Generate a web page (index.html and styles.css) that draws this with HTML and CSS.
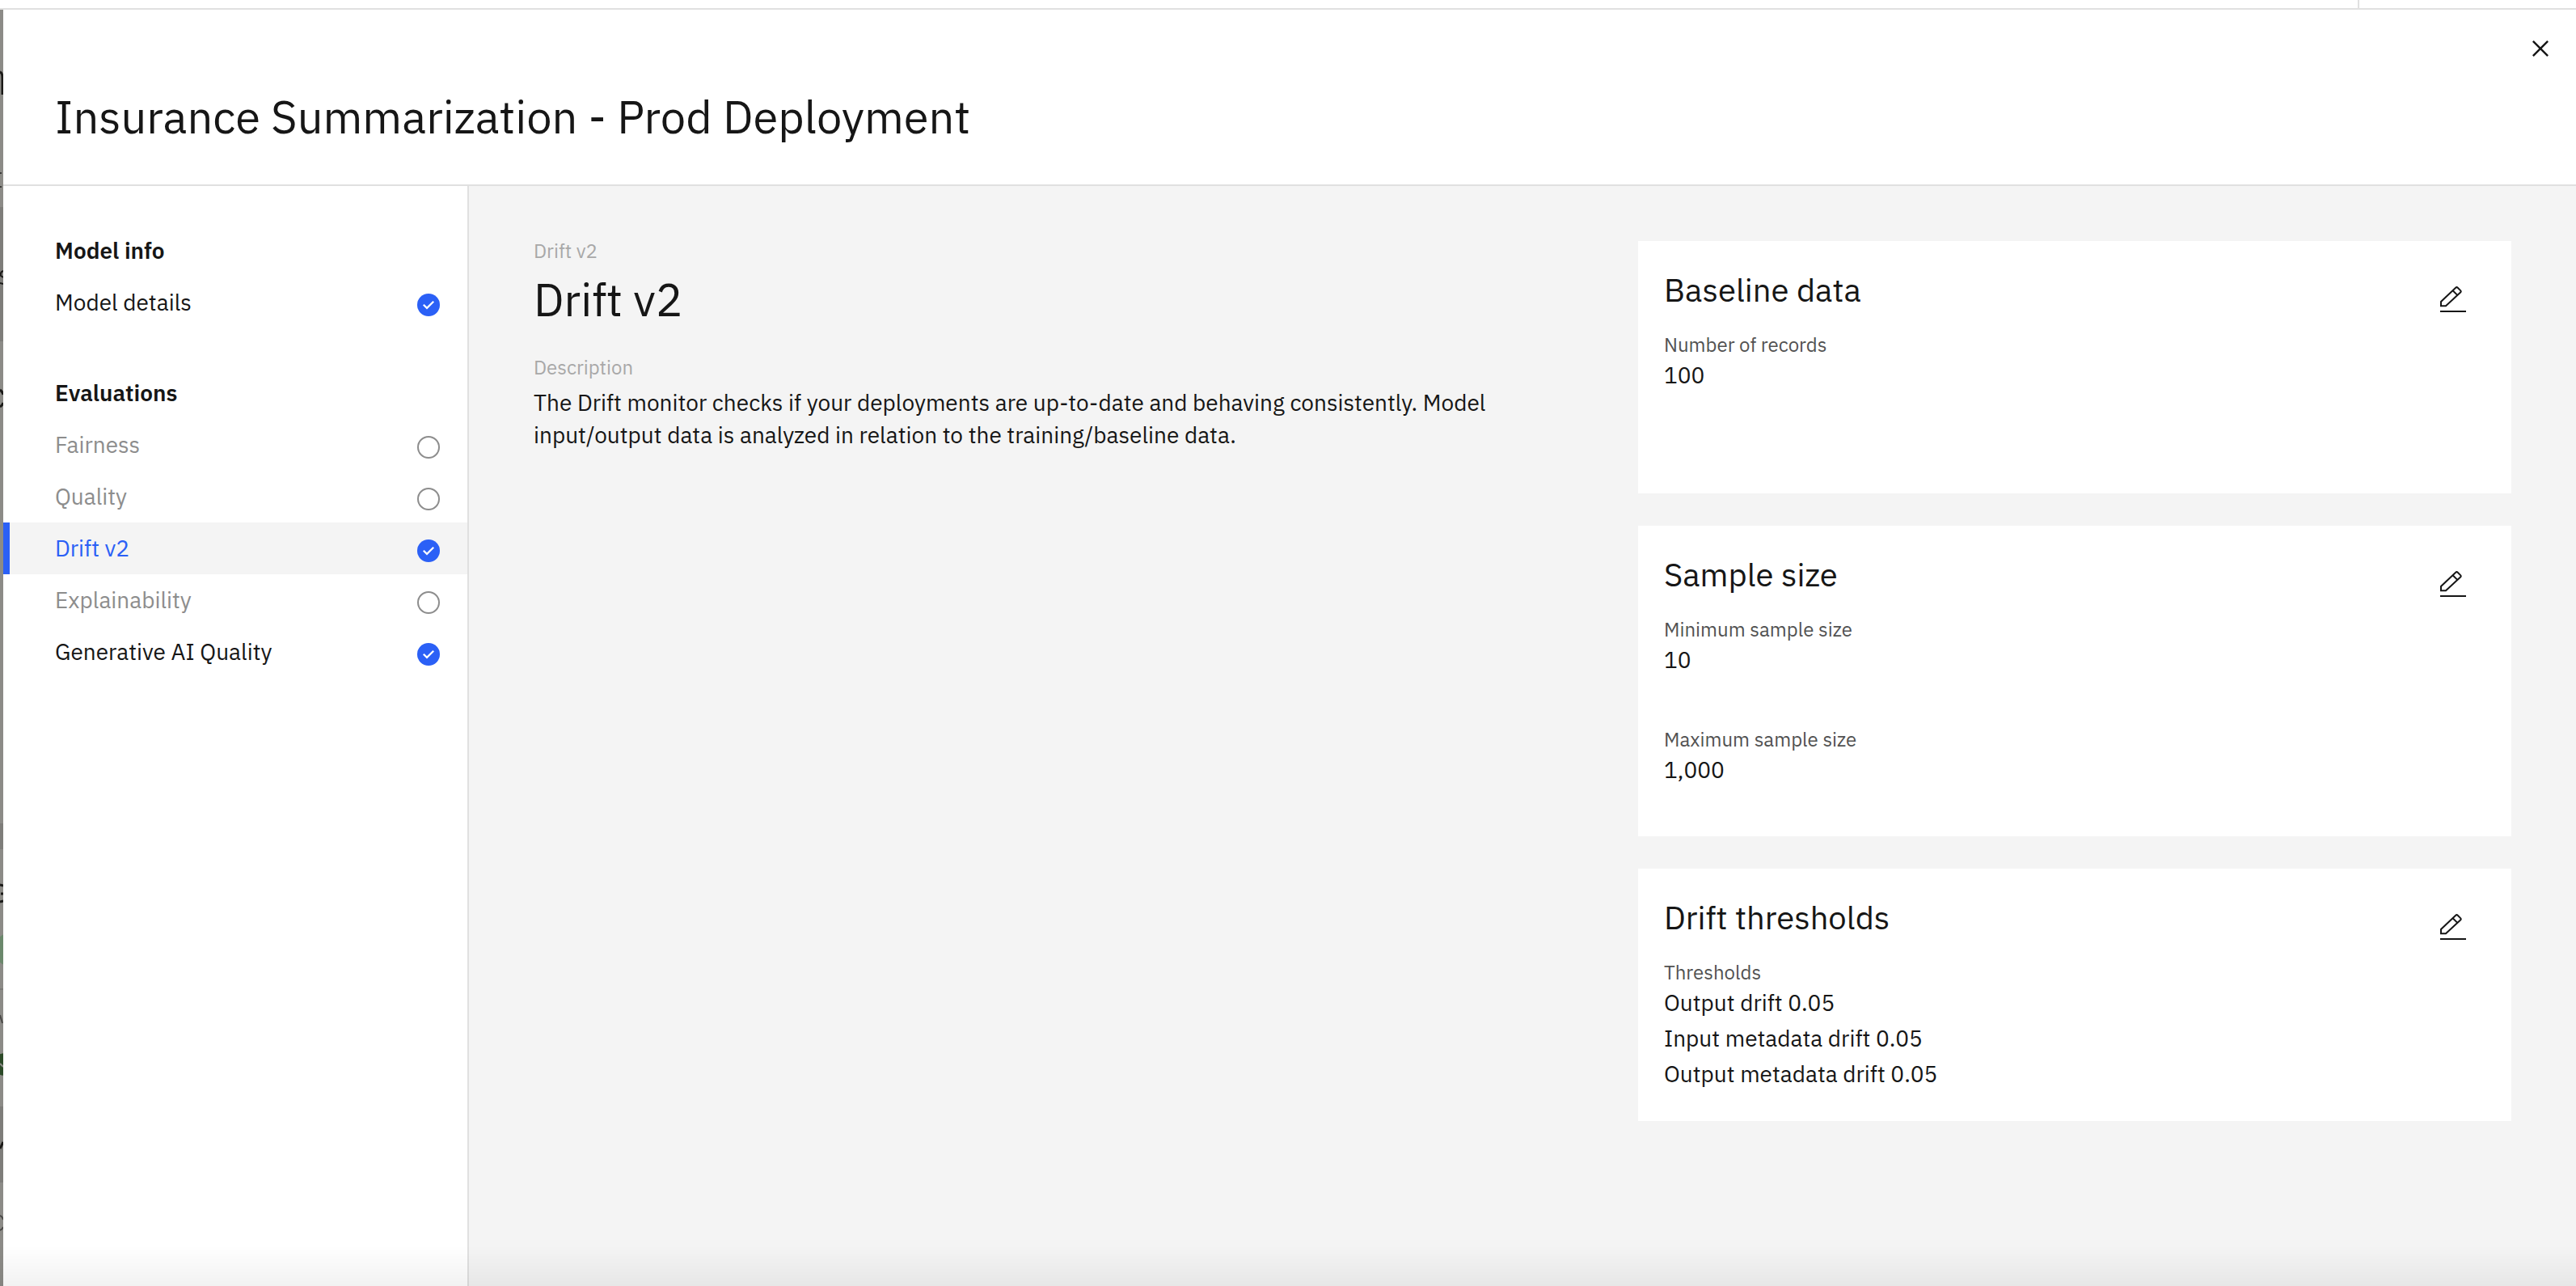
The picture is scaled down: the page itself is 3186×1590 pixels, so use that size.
FILE: index.html
```html
<!DOCTYPE html>
<html lang="en">
<head>
<meta charset="utf-8">
<title>Insurance Summarization - Prod Deployment</title>
<link rel="stylesheet" href="styles.css">
</head>
<body>
<svg class="sprite" aria-hidden="true">
  <symbol id="done" viewBox="0 0 32 32"><circle cx="16" cy="16" r="14" fill="#2b60f6"/><path d="M14 21.5L9 16.54 10.59 15 14 18.35 21.41 11 23 12.58z" fill="#fff"/></symbol>
  <symbol id="todo" viewBox="0 0 32 32"><circle cx="16" cy="16" r="13" fill="none" stroke="#8d8d8d" stroke-width="2"/></symbol>
  <symbol id="edit" viewBox="0 0 32 32"><path d="M1 24.3V18.9L19.2 1.7a1.8 1.8 0 0 1 2.5 0l3.4 3.4a1.8 1.8 0 0 1 0 2.5L7 24.3zM15.6 5.2l5.7 5.7" fill="none" stroke="#161616" stroke-width="2"/><path d="M0 30h32v2H0z" fill="#161616"/></symbol>
</svg>

<div class="topbar"><div class="topbar-actions"></div></div>

<div class="shell">
  <div class="backdrop" aria-hidden="true">
    <svg class="backdrop-art" width="4" height="1578">
      <path d="M0 244h4v166H0zM0 1006h4v32H0zM0 1356h4v94H0z" fill="#7e7d7a"/>
      <path d="M0 201h2v2H0zM0 218h2v2H0z" fill="#3c3b39"/>
      <path d="M0 1210h4v2H0z" fill="#7b7a77"/>
      <circle cx="14" cy="1162" r="21" fill="#6b886c"/>
      <circle cx="6" cy="1304" r="14" fill="#2c4a28"/>
      <path d="M0 1303l4 4" stroke="#8c8b87" stroke-width="2"/>
      <path d="M3 105V84q0-6-3-7" stroke="#1b1a18" stroke-width="3" fill="none"/>
      <path d="M4 323q-4 1-3 6l3 2M0 338l4 1" stroke="#1b1a18" stroke-width="2" fill="none"/>
      <path d="M0 470q3 2 4 6M0 491q3-2 4-5" stroke="#1b1a18" stroke-width="3" fill="none"/>
      <path d="M0 1082l4 1M0 1103l4-1M1 1093h3" stroke="#1b1a18" stroke-width="3" fill="none"/>
      <path d="M0 1243l3 10" stroke="#4a4947" stroke-width="2" fill="none"/>
      <path d="M0 1408l4-8" stroke="#1b1a18" stroke-width="3" fill="none"/>
      <path d="M0 1491q3 1 4 5M0 1509q3-1 4-4" stroke="#4a4947" stroke-width="2" fill="none"/>
    </svg>
  </div>

  <div class="panel">
    <header class="header">
      <h1 class="title">Insurance Summarization - Prod Deployment</h1>
      <button class="icon-button close" type="button" aria-label="Close">
        <svg width="40" height="40" viewBox="0 0 32 32"><path d="M24 9.4L22.6 8 16 14.6 9.4 8 8 9.4l6.6 6.6L8 22.6 9.4 24l6.6-6.6 6.6 6.6 1.4-1.4-6.6-6.6L24 9.4z" fill="#161616"/></svg>
      </button>
    </header>

    <div class="body">
      <nav class="sidebar" aria-label="Configuration">
        <section class="nav-group">
          <h2 class="nav-heading">Model info</h2>
          <a class="nav-item" href="#details">Model details<svg class="status"><use href="#done"/></svg></a>
        </section>
        <section class="nav-group">
          <h2 class="nav-heading">Evaluations</h2>
          <a class="nav-item muted" href="#fairness">Fairness<svg class="status"><use href="#todo"/></svg></a>
          <a class="nav-item muted" href="#quality">Quality<svg class="status"><use href="#todo"/></svg></a>
          <a class="nav-item active" href="#drift" aria-current="page">Drift v2<svg class="status"><use href="#done"/></svg></a>
          <a class="nav-item muted" href="#explainability">Explainability<svg class="status"><use href="#todo"/></svg></a>
          <a class="nav-item" href="#genai">Generative AI Quality<svg class="status"><use href="#done"/></svg></a>
        </section>
      </nav>

      <main class="main" id="drift">
        <section class="intro">
          <p class="hint">Drift v2</p>
          <h2 class="title intro-title">Drift v2</h2>
          <p class="hint">Description</p>
          <p class="description">The Drift monitor checks if your deployments are up-to-date and behaving consistently. Model input/output data is analyzed in relation to the training/baseline data.</p>
        </section>

        <div class="cards">
          <section class="card">
            <div class="card-header">
              <h3 class="card-title">Baseline data</h3>
              <button class="icon-button edit" type="button" aria-label="Edit baseline data"><svg width="32" height="32"><use href="#edit"/></svg></button>
            </div>
            <dl class="fields">
              <div><dt>Number of records</dt><dd>100</dd></div>
            </dl>
          </section>
          <section class="card">
            <div class="card-header">
              <h3 class="card-title">Sample size</h3>
              <button class="icon-button edit" type="button" aria-label="Edit sample size"><svg width="32" height="32"><use href="#edit"/></svg></button>
            </div>
            <dl class="fields">
              <div><dt>Minimum sample size</dt><dd>10</dd></div>
              <div><dt>Maximum sample size</dt><dd>1,000</dd></div>
            </dl>
          </section>
          <section class="card">
            <div class="card-header">
              <h3 class="card-title">Drift thresholds</h3>
              <button class="icon-button edit" type="button" aria-label="Edit drift thresholds"><svg width="32" height="32"><use href="#edit"/></svg></button>
            </div>
            <dl class="fields compact">
              <div><dt>Thresholds</dt><dd>Output drift 0.05</dd><dd>Input metadata drift 0.05</dd><dd>Output metadata drift 0.05</dd></div>
            </dl>
          </section>
        </div>
      </main>
    </div>
  </div>
</div>
<div class="fade"></div>
</body>
</html>
```
FILE: styles.css
```css
* { box-sizing: border-box; margin: 0; padding: 0; }

body {
  display: flex;
  flex-direction: column;
  min-height: 100vh;
  background: #fff;
  color: #161616;
  font-family: "IBM Plex Sans", "Liberation Sans", sans-serif;
  font-size: 28px;
  line-height: 40px;
}

h1, h2, h3 { font-weight: 400; }
a { color: inherit; text-decoration: none; }
svg { display: block; }
.sprite { position: absolute; width: 0; height: 0; }

.topbar {
  display: flex;
  justify-content: flex-end;
  height: 12px;
  border-bottom: 2px solid #e0e0e0;
}
.topbar-actions { width: 270px; border-left: 2px solid #e0e0e0; }

.shell { display: flex; flex: 1; }
.backdrop { position: relative; width: 4px; background: #8c8b87; overflow: hidden; }
.backdrop-art { position: absolute; top: 0; left: 0; }

.panel { display: flex; flex: 1; flex-direction: column; min-width: 0; }
.header {
  display: flex;
  align-items: flex-start;
  justify-content: space-between;
  padding: 28px 24px 48px 64px;
  border-bottom: 2px solid #e0e0e0;
}
.title { font-size: 56px; line-height: 72px; }
.header .title { padding-top: 68px; }

.icon-button { border: 0; background: none; cursor: pointer; }

.body { display: flex; flex: 1; }
.sidebar { flex: none; width: 576px; padding-top: 48px; border-right: 2px solid #e0e0e0; }
.nav-group { margin-bottom: 48px; }
.nav-heading, .nav-item {
  display: flex;
  align-items: center;
  justify-content: space-between;
  height: 64px;
  padding: 0 32px 0 64px;
}
.nav-heading { font-size: 28px; font-weight: 600; }
.muted { color: #8d8d8d; }
.active { padding-left: 56px; border-left: 8px solid #2b60f6; background: #f4f4f4; color: #2b60f6; }
.status { width: 32px; height: 32px; margin-top: 6px; }

.main {
  display: grid;
  flex: 1;
  grid-template-columns: 67fr 60fr;
  gap: 160px;
  align-items: start;
  padding: 64px 80px;
  background: #f4f4f4;
}
.hint { color: #a8a8a8; font-size: 24px; line-height: 32px; }
.intro-title { margin: 8px 0 32px; }
.description { margin-top: 8px; }

.cards { display: flex; flex-direction: column; gap: 40px; padding-top: 4px; }
.card { min-height: 312px; padding: 32px 32px 0; background: #fff; }
.card-header { display: flex; align-items: flex-end; justify-content: space-between; padding-bottom: 24px; }
.card-title { font-size: 40px; line-height: 56px; }
.edit { margin-right: 24px; }

.fields { display: flex; flex-direction: column; gap: 60px; padding-bottom: 60px; }
.compact { padding-bottom: 32px; }
.fields dt { color: #525252; font-size: 24px; line-height: 32px; }
.fields dd { line-height: 44px; }

.fade {
  position: fixed;
  right: 0;
  bottom: 0;
  left: 0;
  height: 50px;
  background: linear-gradient(rgba(0, 0, 0, 0), rgba(0, 0, 0, 0.05));
  pointer-events: none;
}
```
